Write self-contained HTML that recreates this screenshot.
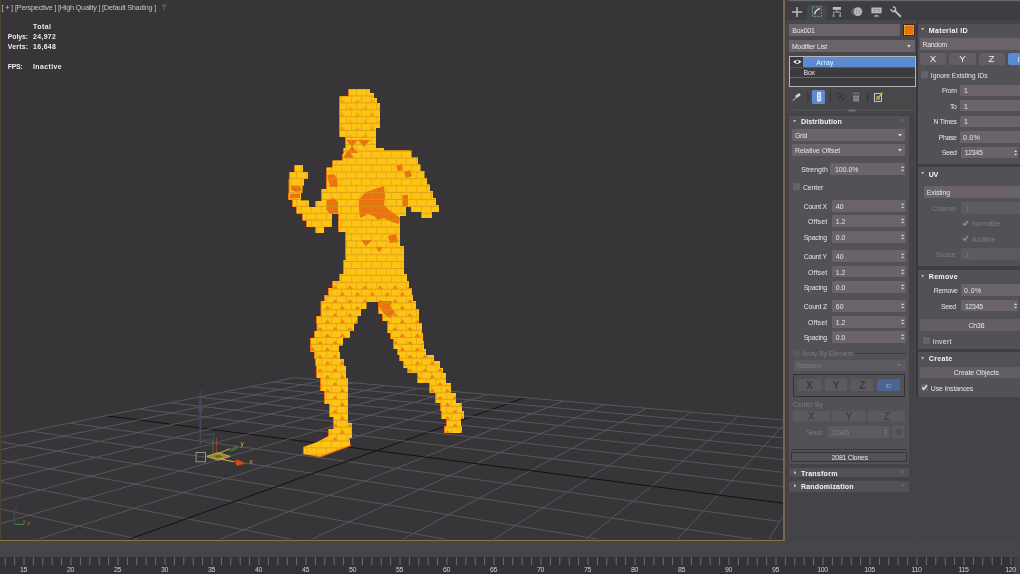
<!DOCTYPE html>
<html lang="en"><head><meta charset="utf-8"><title>3ds Max - Array modifier</title>
<style>html,body{margin:0;padding:0}body{width:1020px;height:574px;overflow:hidden;position:relative;background:#444347;font-family:"Liberation Sans", sans-serif;}div{box-sizing:border-box} svg{display:block;overflow:visible} #app{position:absolute;left:0;top:0;width:1020px;height:574px;overflow:hidden;will-change:transform}</style></head><body><div id="app">
<div id="viewport" style="position:absolute;left:0;top:0;width:785px;height:542px;background:#373538;overflow:hidden">
<svg width="785" height="542" viewBox="0 0 785 542" style="position:absolute;left:0;top:0">
<g id="grid"><line x1="664.8" y1="707.4" x2="839.6" y2="425.0" stroke="#5b5a5f" stroke-width="0.9"/>
<line x1="664.8" y1="707.4" x2="-234.8" y2="484.6" stroke="#5b5a5f" stroke-width="0.9"/>
<line x1="547.6" y1="678.4" x2="787.7" y2="420.5" stroke="#5b5a5f" stroke-width="0.9"/>
<line x1="693.6" y1="660.8" x2="-170.3" y2="471.6" stroke="#5b5a5f" stroke-width="0.9"/>
<line x1="444.5" y1="652.9" x2="738.4" y2="416.2" stroke="#5b5a5f" stroke-width="0.9"/>
<line x1="717.2" y1="622.8" x2="-112.4" y2="459.9" stroke="#5b5a5f" stroke-width="0.9"/>
<line x1="352.9" y1="630.2" x2="691.5" y2="412.1" stroke="#5b5a5f" stroke-width="0.9"/>
<line x1="736.8" y1="591.1" x2="-60.2" y2="449.3" stroke="#5b5a5f" stroke-width="0.9"/>
<line x1="271.0" y1="609.9" x2="646.8" y2="408.3" stroke="#5b5a5f" stroke-width="0.9"/>
<line x1="753.4" y1="564.3" x2="-12.8" y2="439.7" stroke="#5b5a5f" stroke-width="0.9"/>
<line x1="197.5" y1="591.7" x2="604.2" y2="404.6" stroke="#5b5a5f" stroke-width="0.9"/>
<line x1="767.6" y1="541.4" x2="30.3" y2="431.0" stroke="#5b5a5f" stroke-width="0.9"/>
<line x1="130.9" y1="575.2" x2="563.5" y2="401.0" stroke="#5b5a5f" stroke-width="0.9"/>
<line x1="779.8" y1="521.5" x2="69.7" y2="423.1" stroke="#5b5a5f" stroke-width="0.9"/>
<line x1="70.5" y1="560.2" x2="524.7" y2="397.7" stroke="#121114" stroke-width="1.0"/>
<line x1="790.6" y1="504.2" x2="105.9" y2="415.8" stroke="#121114" stroke-width="1.0"/>
<line x1="15.4" y1="546.6" x2="487.5" y2="394.4" stroke="#5b5a5f" stroke-width="0.9"/>
<line x1="800.1" y1="488.8" x2="139.2" y2="409.0" stroke="#5b5a5f" stroke-width="0.9"/>
<line x1="-35.0" y1="534.1" x2="451.9" y2="391.3" stroke="#5b5a5f" stroke-width="0.9"/>
<line x1="808.5" y1="475.2" x2="170.0" y2="402.8" stroke="#5b5a5f" stroke-width="0.9"/>
<line x1="-81.4" y1="522.6" x2="417.8" y2="388.4" stroke="#5b5a5f" stroke-width="0.9"/>
<line x1="816.0" y1="463.1" x2="198.5" y2="397.0" stroke="#5b5a5f" stroke-width="0.9"/>
<line x1="-124.3" y1="512.0" x2="385.1" y2="385.5" stroke="#5b5a5f" stroke-width="0.9"/>
<line x1="822.8" y1="452.1" x2="225.0" y2="391.7" stroke="#5b5a5f" stroke-width="0.9"/>
<line x1="-163.9" y1="502.2" x2="353.7" y2="382.8" stroke="#5b5a5f" stroke-width="0.9"/>
<line x1="828.9" y1="442.2" x2="249.8" y2="386.7" stroke="#5b5a5f" stroke-width="0.9"/>
<line x1="-200.6" y1="493.1" x2="323.5" y2="380.2" stroke="#5b5a5f" stroke-width="0.9"/>
<line x1="834.5" y1="433.2" x2="272.9" y2="382.0" stroke="#5b5a5f" stroke-width="0.9"/>
<line x1="-234.8" y1="484.6" x2="294.5" y2="377.7" stroke="#5b5a5f" stroke-width="0.9"/>
<line x1="839.6" y1="425.0" x2="294.5" y2="377.7" stroke="#5b5a5f" stroke-width="0.9"/></g>
<g id="gizmo" fill="none">
<line x1="200.4" y1="393" x2="200.4" y2="444.5" stroke="#454a61" stroke-width="1.7"/>
<path d="M200.4 396.5 L202.9 408.5 L202.3 411.6 L200.4 413.4 L198.5 411.6 L197.9 408.5Z" fill="#454a61"/>
<path d="M202.7 434.5 H213.7 M202.7 440 H213.7 M213.7 433 V447.5" stroke="#474c63" stroke-width="1"/>
<line x1="213" y1="440" x2="213" y2="454" stroke="#3c7d38" stroke-width="0.9"/>
<line x1="216.4" y1="438" x2="216.4" y2="455.5" stroke="#a83f2b" stroke-width="0.9"/>
<rect x="196" y="452.5" width="9.5" height="9.3" stroke="#9a999c" stroke-width="0.9"/>
<path d="M206.7 456.3 L218 452.6 L230.2 456.3 L218 460.2Z" fill="#8a7a2c" fill-opacity="0.55" stroke="#c9b23e" stroke-width="0.9"/>
<path d="M209 456.3 L218 453.6 L227.5 456.3 L218 459.2Z M212 456.3 L218 454.6 L224.5 456.3 L218 458.2Z" stroke="#c9b23e" stroke-width="0.5"/>
<path d="M217.6 454 L230 448.6 M219 458.6 L234 461.8" stroke="#c9b23e" stroke-width="1"/>
<path d="M228.4 450.4 L236.2 445.2 L239.8 447.2 L232 451.4Z" fill="#38732f"/>
<path d="M233.2 461 L237.6 459.2 L246 463.6 L237.4 466Z" fill="#c23a12"/>
<path d="M237.4 461.4h.9v.9h-.9z M239.6 462.4h.9v.9h-.9z M237.6 463.6h.9v.9h-.9z M241.6 463.4h.9v.9h-.9z" fill="#e9c23a"/>
</g>
<text x="201.8" y="393.4" font-size="5" fill="#4a4f66" text-anchor="middle" font-family='"Liberation Sans", sans-serif'>z</text>
<text x="242.2" y="445.6" font-size="6.5" fill="#c9b23e" text-anchor="middle" font-family='"Liberation Sans", sans-serif'>y</text>
<text x="251" y="464" font-size="6.5" fill="#c9b23e" text-anchor="middle" font-family='"Liberation Sans", sans-serif'>x</text>
<g id="tripod" fill="none"><line x1="14.4" y1="508.5" x2="14.4" y2="524.6" stroke="#41465c" stroke-width="1.7"/>
<line x1="15" y1="524.4" x2="24" y2="524.4" stroke="#3f9a3a" stroke-width="0.9"/></g>
<text x="16.4" y="508" font-size="5" fill="#454a61" text-anchor="middle" font-family='"Liberation Sans", sans-serif'>z</text>
<text x="24.2" y="523.4" font-size="5" fill="#4aa03a" text-anchor="middle" font-family='"Liberation Sans", sans-serif'>y</text>
<text x="28.7" y="525.2" font-size="6" font-weight="bold" fill="#b8452a" text-anchor="middle" font-family='"Liberation Sans", sans-serif'>x</text>
<g id="figure"><g fill="#ea730f">
<polygon points="369,89 369,93 373,93 373,98 376,98 376,103 379,103 379,128 375,128 375,148 383,148 383,150.5 410.5,150.5 410.5,157.5 417,157.5 417,164.5 419.5,164.5 419.5,171 423.5,171 423.5,178 426,178 426,184.5 429,184.5 429,191 432,191 432,198 435,198 435,205 438,205 438,212 405,212 405,216 399,216 399,246 403,246 403,274 406,274 406,281 408,281 408,288 411,288 411,295 412,295 412,302 324,302 324,295 328,295 328,288 332,288 332,281 339,281 339,274 343,274 343,260 345,260 345,232 338,232 338,214 315,214 315,201 321,201 321,189 326,189 326,167.5 332,167.5 332,160.5 342,160.5 342,154 343,154 343,148 345,148 345,137 339,137 339,96.3 348,96.3 348,89"/>
<polygon points="421,212 431,212 431,218 421,218"/>
<polygon points="302,165 302,172 307,172 307,179 303,179 303,185.5 301.5,185.5 301.5,193 300,193 300,200.5 308,200.5 308,207 338,207 338,214 331,214 331,227 323,227 323,233 315,233 315,227 306,227 306,220.5 302,220.5 302,213.5 296,213.5 296,207 292,207 292,200 288,200 288,193 288.5,193 288.5,179 289,179 289,172 294,172 294,165"/>
<polygon points="365.5,301 365.5,309 360,309 360,316 356.5,316 356.5,323.5 353,323.5 353,331 349,331 349,338 342,338 342,345.5 338,345.5 338,352 339,352 339,359 343,359 343,366 345,366 345,378 347,378 347,423 351,423 351,438 328,438 328,429 333,429 333,417 329,417 329,404 324,404 324,391 320,391 320,378 316,378 316,366 315,366 315,359 314,359 314,352 310,352 310,338 314,338 314,331 316.5,331 316.5,323.5 316,323.5 316,316 320.5,316 320.5,301"/>
<polygon points="415,301 415,309 418,309 418,323 421,323 421,333 422,333 422,341 423,341 423,349 425,349 425,355 433,355 433,361 439,361 439,368 442,368 442,373 445,373 445,383 450,383 450,393 455,393 455,403 461,403 461,411 463,411 463,419 460,419 460,426 461,426 461,433 444,433 444,426 446,426 446,419 441,419 441,411 440,411 440,403 435,403 435,393 429,393 429,383 417,383 417,373 407,373 407,368 403,368 403,361 399,361 399,355 397,355 397,349 393,349 393,339 390,339 390,333 387,333 387,321 382,321 382,314 378,314 378,301"/>
<polygon points="303,447 317,442 328,436 349,436 349,445 319,456 303,454"/>
<polygon points="303,454 320,457.5 351,446 351,444 320,455 303,452"/>
</g>
<g fill="#fdc413">
<polygon points="370,89 370,93 374,93 374,98 377,98 377,103 380,103 380,128 376,128 376,148 384,148 384,150.5 411.5,150.5 411.5,157.5 418,157.5 418,164.5 420.5,164.5 420.5,171 424.5,171 424.5,178 427,178 427,184.5 430,184.5 430,191 433,191 433,198 436,198 436,205 439,205 439,212 406,212 406,216 400,216 400,246 404,246 404,274 407,274 407,281 409,281 409,288 412,288 412,295 413,295 413,302 325,302 325,295 329,295 329,288 333,288 333,281 340,281 340,274 344,274 344,260 346,260 346,232 339,232 339,214 316,214 316,201 322,201 322,189 327,189 327,167.5 333,167.5 333,160.5 343,160.5 343,154 344,154 344,148 346,148 346,137 340,137 340,96.3 349,96.3 349,89"/>
<polygon points="422,212 432,212 432,218 422,218"/>
<polygon points="303,165 303,172 308,172 308,179 304,179 304,185.5 302.5,185.5 302.5,193 301,193 301,200.5 309,200.5 309,207 339,207 339,214 332,214 332,227 324,227 324,233 316,233 316,227 307,227 307,220.5 303,220.5 303,213.5 297,213.5 297,207 293,207 293,200 289,200 289,193 289.5,193 289.5,179 290,179 290,172 295,172 295,165"/>
<polygon points="366.5,301 366.5,309 361,309 361,316 357.5,316 357.5,323.5 354,323.5 354,331 350,331 350,338 343,338 343,345.5 339,345.5 339,352 340,352 340,359 344,359 344,366 346,366 346,378 348,378 348,423 352,423 352,438 329,438 329,429 334,429 334,417 330,417 330,404 325,404 325,391 321,391 321,378 317,378 317,366 316,366 316,359 315,359 315,352 311,352 311,338 315,338 315,331 317.5,331 317.5,323.5 317,323.5 317,316 321.5,316 321.5,301"/>
<polygon points="416,301 416,309 419,309 419,323 422,323 422,333 423,333 423,341 424,341 424,349 426,349 426,355 434,355 434,361 440,361 440,368 443,368 443,373 446,373 446,383 451,383 451,393 456,393 456,403 462,403 462,411 464,411 464,419 461,419 461,426 462,426 462,433 445,433 445,426 447,426 447,419 442,419 442,411 441,411 441,403 436,403 436,393 430,393 430,383 418,383 418,373 408,373 408,368 404,368 404,361 400,361 400,355 398,355 398,349 394,349 394,339 391,339 391,333 388,333 388,321 383,321 383,314 379,314 379,301"/>
<polygon points="304,447 318,442 329,436 350,436 350,445 320,456 304,454"/>
</g>
<g fill="#ea730f">
<polygon points="359,199 366,192 384,186 385,196 384,205 389,210 400,218 399,224 392,222 384,218 378,220 374,216 368,214 360,218 359,208"/>
<polygon points="326.5,200 334,198 338,202 338,213 330,214 326.5,210"/>
<polygon points="327,175 334,174 337.5,180 337.5,187 330,187"/>
<polygon points="346,140 358,140 352,147"/><polygon points="358,140 370,140 364,147"/><polygon points="347,153 352,146 358,153"/><polygon points="343,158 348,150 354,158"/>
<polygon points="404,172 410,170 412,176 406,178"/><polygon points="396,166 402,164 403,170 398,171"/><polygon points="388,236 396,234 398,242 390,243"/><polygon points="361,240 372,240 366,246"/><polygon points="376,247 383,247 379,252"/>
<polygon points="291,186 300,186 302,191 296,192 291,190"/><polygon points="290,194 300,193.5 300,198 290,198.5"/>
<polygon points="379,301 392,301 390,306 395,312 390,318 384,314 379,306"/>
<polygon points="402.5,195 408,195 408,207 402.5,207"/>
<rect x="406" y="207" width="5" height="5.4" fill="#373538"/>
</g><defs><pattern id="bricks" x="286" y="88.6" width="10" height="13.8" patternUnits="userSpaceOnUse"><path d="M0 0.4H10M0 7.3H10" stroke="#d0951a" stroke-width="0.9" fill="none"/><path d="M0.4 0V6.9M5.4 6.9V13.8" stroke="#d0951a" stroke-width="0.8" fill="none" opacity="0.7"/></pattern><pattern id="tris" x="286" y="88.6" width="15" height="13.8" patternUnits="userSpaceOnUse"><path d="M1.2 7 L4 3.6 L6.8 7Z M8.5 13.8 L11.5 10.2 L14.2 13.8Z" fill="#ea730f"/></pattern>
<clipPath id="figclip">
<polygon points="370,89 370,93 374,93 374,98 377,98 377,103 380,103 380,128 376,128 376,148 384,148 384,150.5 411.5,150.5 411.5,157.5 418,157.5 418,164.5 420.5,164.5 420.5,171 424.5,171 424.5,178 427,178 427,184.5 430,184.5 430,191 433,191 433,198 436,198 436,205 439,205 439,212 406,212 406,216 400,216 400,246 404,246 404,274 407,274 407,281 409,281 409,288 412,288 412,295 413,295 413,302 325,302 325,295 329,295 329,288 333,288 333,281 340,281 340,274 344,274 344,260 346,260 346,232 339,232 339,214 316,214 316,201 322,201 322,189 327,189 327,167.5 333,167.5 333,160.5 343,160.5 343,154 344,154 344,148 346,148 346,137 340,137 340,96.3 349,96.3 349,89"/>
<polygon points="422,212 432,212 432,218 422,218"/>
<polygon points="303,165 303,172 308,172 308,179 304,179 304,185.5 302.5,185.5 302.5,193 301,193 301,200.5 309,200.5 309,207 339,207 339,214 332,214 332,227 324,227 324,233 316,233 316,227 307,227 307,220.5 303,220.5 303,213.5 297,213.5 297,207 293,207 293,200 289,200 289,193 289.5,193 289.5,179 290,179 290,172 295,172 295,165"/>
<polygon points="366.5,301 366.5,309 361,309 361,316 357.5,316 357.5,323.5 354,323.5 354,331 350,331 350,338 343,338 343,345.5 339,345.5 339,352 340,352 340,359 344,359 344,366 346,366 346,378 348,378 348,423 352,423 352,438 329,438 329,429 334,429 334,417 330,417 330,404 325,404 325,391 321,391 321,378 317,378 317,366 316,366 316,359 315,359 315,352 311,352 311,338 315,338 315,331 317.5,331 317.5,323.5 317,323.5 317,316 321.5,316 321.5,301"/>
<polygon points="416,301 416,309 419,309 419,323 422,323 422,333 423,333 423,341 424,341 424,349 426,349 426,355 434,355 434,361 440,361 440,368 443,368 443,373 446,373 446,383 451,383 451,393 456,393 456,403 462,403 462,411 464,411 464,419 461,419 461,426 462,426 462,433 445,433 445,426 447,426 447,419 442,419 442,411 441,411 441,403 436,403 436,393 430,393 430,383 418,383 418,373 408,373 408,368 404,368 404,361 400,361 400,355 398,355 398,349 394,349 394,339 391,339 391,333 388,333 388,321 383,321 383,314 379,314 379,301"/>
<polygon points="304,447 318,442 329,436 350,436 350,445 320,456 304,454"/>
</clipPath></defs>
<rect x="286" y="89" width="182" height="370" fill="url(#bricks)" clip-path="url(#figclip)" opacity="0.85"/>
<g clip-path="url(#figclip)"><rect x="300" y="282" width="170" height="160" fill="url(#tris)" opacity="0.8"/><rect x="340" y="100" width="42" height="40" fill="url(#tris)" opacity="0.35"/></g></g>
<path d="M161.4 4.6 H167.2 L165 7.6 V10.8 L163.6 9.8 V7.6Z" fill="#5a595e"/>
</svg>
<div style="position:absolute;top:3px;height:10px;line-height:10px;font-size:7.3px;color:#c4c4c6;white-space:nowrap;letter-spacing:1.5px;left:1.80px;">[+]</div>
<div style="position:absolute;top:3px;height:10px;line-height:10px;font-size:7.3px;color:#c4c4c6;white-space:nowrap;letter-spacing:-0.21px;left:15.00px;">[Perspective ]</div>
<div style="position:absolute;top:3px;height:10px;line-height:10px;font-size:7.3px;color:#c4c4c6;white-space:nowrap;letter-spacing:-0.225px;left:57.90px;">[High Quality ]</div>
<div style="position:absolute;top:3px;height:10px;line-height:10px;font-size:7.3px;color:#c4c4c6;white-space:nowrap;letter-spacing:-0.225px;left:102.00px;">[Default Shading ]</div>
<div style="position:absolute;top:22px;height:10px;line-height:10px;font-size:6.9px;color:#ededed;white-space:nowrap;font-weight:bold;letter-spacing:0.508px;left:33.00px;">Total</div>
<div style="position:absolute;top:32px;height:10px;line-height:10px;font-size:6.9px;color:#ededed;white-space:nowrap;font-weight:bold;letter-spacing:-0.081px;left:7.80px;">Polys:</div>
<div style="position:absolute;top:32px;height:10px;line-height:10px;font-size:6.9px;color:#ededed;white-space:nowrap;font-weight:bold;letter-spacing:0.359px;left:33.00px;">24,972</div>
<div style="position:absolute;top:42px;height:10px;line-height:10px;font-size:6.9px;color:#ededed;white-space:nowrap;font-weight:bold;letter-spacing:0.225px;left:7.80px;">Verts:</div>
<div style="position:absolute;top:42px;height:10px;line-height:10px;font-size:6.9px;color:#ededed;white-space:nowrap;font-weight:bold;letter-spacing:0.359px;left:33.00px;">16,648</div>
<div style="position:absolute;top:62px;height:10px;line-height:10px;font-size:6.9px;color:#ededed;white-space:nowrap;font-weight:bold;letter-spacing:-0.35px;left:7.80px;">FPS:</div>
<div style="position:absolute;top:62px;height:10px;line-height:10px;font-size:6.9px;color:#ededed;white-space:nowrap;font-weight:bold;letter-spacing:0.415px;left:33.00px;">Inactive</div>
<div style="position:absolute;left:0.00px;top:0.00px;width:1.30px;height:542.00px;background:#4b4634;"></div>
<div style="position:absolute;left:0.00px;top:539.30px;width:785.00px;height:0.60px;background:#3f3a30;"></div>
<div style="position:absolute;left:0.00px;top:539.80px;width:785.00px;height:1.50px;background:#85763f;"></div>
<div style="position:absolute;left:782.80px;top:0.00px;width:2.20px;height:541.30px;background:#77665a;"></div>
</div>
<div id="cmdpanel" style="position:absolute;left:785px;top:0;width:235px;height:541.6px;background:#444347"></div>
<div style="position:absolute;left:785.00px;top:0.00px;width:1.00px;height:541.30px;background:#464238;"></div>
<div style="position:absolute;left:788.80px;top:0.00px;width:232.00px;height:1.00px;background:#68676c;"></div>
<div style="position:absolute;left:785.00px;top:1.60px;width:235.00px;height:18.80px;background:#3e3d41;"></div>
<div style="position:absolute;left:786.00px;top:20.40px;width:130.20px;height:92.60px;background:#484749;"></div>
<div style="position:absolute;left:806.90px;top:4.70px;width:20.00px;height:15.90px;background:#484749;"></div>
<svg style="position:absolute;left:785px;top:0" width="235" height="22" viewBox="785 0 235 22">
<path d="M792 11.9 H802.2 M797 7 V16.9" stroke="#b9b9bb" stroke-width="1.5" fill="none"/>
<rect x="812.5" y="6.9" width="8.8" height="9.6" fill="none" stroke="#5f93a4" stroke-width="1" stroke-dasharray="2.4 1"/>
<path d="M814.6 14.4 Q815.4 9.6 820 8.6" stroke="#e6e6e6" stroke-width="1.3" fill="none"/>
<rect x="832.8" y="7" width="8.2" height="2.8" fill="#bdbdbf"/>
<path d="M836.9 9.8 V12 M833.6 15 V12 H840.2 V15" stroke="#bdbdbf" stroke-width="0.8" fill="none"/>
<rect x="832.6" y="15" width="2" height="2" fill="#6f9aa6"/><rect x="839.2" y="15" width="2" height="2" fill="#6f9aa6"/>
<circle cx="855.2" cy="11.6" r="4.2" fill="#59585d"/>
<circle cx="857.9" cy="11.6" r="4.3" fill="#b4b4b6"/>
<circle cx="856.6" cy="10.4" r="0.6" fill="#8a898d"/><circle cx="859.2" cy="10.4" r="0.6" fill="#8a898d"/><circle cx="856.6" cy="12.9" r="0.6" fill="#8a898d"/><circle cx="859.2" cy="12.9" r="0.6" fill="#8a898d"/>
<rect x="871.4" y="7.5" width="10.2" height="5.8" fill="#b9b9bb"/>
<path d="M873.4 9h1.6v1h-1.6z M875.8 9h1.6v1h-1.6z M878.2 9h1.6v1h-1.6z M873.4 10.8h1.6v1h-1.6z M875.8 10.8h1.6v1h-1.6z M878.2 10.8h1.6v1h-1.6z" fill="#8d8c90"/>
<path d="M874.2 16.2 Q876.5 14.2 878.8 16.2Z" fill="#b9b9bb" stroke="#b9b9bb" stroke-width="0.6"/>
<path d="M894.6 10.6 L900.4 16.2" stroke="#bdbdbf" stroke-width="1.9" fill="none" stroke-linecap="round"/>
<path d="M893.0 7.1 A2.3 2.3 0 1 1 891.1 9.0" stroke="#bdbdbf" stroke-width="1.4" fill="none"/>
</svg>
<div style="position:absolute;left:789.30px;top:24.20px;width:110.50px;height:11.70px;background:#6a636a;border-radius:1px;"></div>
<div style="position:absolute;top:26px;height:10px;line-height:10px;font-size:6.9px;color:#e6e6e6;white-space:nowrap;letter-spacing:-0.16px;left:792.30px;">Box001</div>
<div style="position:absolute;left:902.60px;top:23.90px;width:12.80px;height:12.40px;background:#ea720e;border:0.7px solid #3a2a1c;"></div>
<div style="position:absolute;left:903.70px;top:25.10px;width:10.60px;height:10.10px;background:transparent;border:0.8px dotted #f7c21a;"></div>
<div style="position:absolute;left:789.30px;top:40.30px;width:126.00px;height:11.70px;background:#6a636a;border-radius:1px;"></div>
<div style="position:absolute;top:42px;height:10px;line-height:10px;font-size:6.9px;color:#e6e6e6;white-space:nowrap;letter-spacing:-0.158px;left:791.90px;">Modifier List</div>
<svg style="position:absolute;left:907.40px;top:45.00px" width="3.8" height="2.6" viewBox="0 0 3.8 2.6"><path d="M0 0 L3.8 0 L1.9 2.5Z" fill="#dcdcde"/></svg>
<div style="position:absolute;left:788.90px;top:55.50px;width:127.10px;height:31.10px;background:#3c3b40;border:0.8px solid #b6b6ba;"></div>
<div style="position:absolute;left:802.70px;top:57.10px;width:112.10px;height:9.80px;background:#5b8ad0;"></div>
<div style="position:absolute;top:58px;height:10px;line-height:10px;font-size:6.9px;color:#f6f6f6;white-space:nowrap;letter-spacing:0.179px;left:816.30px;">Array</div>
<div style="position:absolute;top:68px;height:10px;line-height:10px;font-size:6.9px;color:#e2e2e2;white-space:nowrap;letter-spacing:-0.295px;left:803.60px;">Box</div>
<div style="position:absolute;left:790.00px;top:67.40px;width:125.00px;height:0.70px;background:#58575c;"></div>
<div style="position:absolute;left:790.00px;top:77.20px;width:125.00px;height:0.70px;background:#66656a;"></div>
<svg style="position:absolute;left:793.4px;top:59px" width="8.6" height="5.6" viewBox="0 0 8.6 5.6">
<path d="M0.2 2.8 Q4.3 -1.5 8.4 2.8 Q4.3 7.1 0.2 2.8Z" fill="#f2f2f2"/><circle cx="4.3" cy="2.8" r="1.45" fill="#3c3b40"/></svg>
<div style="position:absolute;left:812.20px;top:90.30px;width:13.00px;height:13.30px;background:#5b8ad0;border-radius:1.5px;"></div>
<svg style="position:absolute;left:785px;top:88px" width="130" height="26" viewBox="785 88 130 26">
<path d="M793 100.8 L796.4 97.2" stroke="#d4d4d6" stroke-width="1"/>
<path d="M795.9 97.0 L799.9 94.2" stroke="#d8d8da" stroke-width="2.7"/>
<path d="M808 92.4 V101.8 M830.4 92.4 V101.8 M867.7 92.4 V101.8" stroke="#2c2b2f" stroke-width="0.9"/>
<rect x="817" y="91.9" width="4.2" height="9.7" rx="1.2" fill="#dfe7f5"/>
<path d="M819.1 93.6 V100.2" stroke="#3f69b4" stroke-width="0.9" stroke-dasharray="0.9 0.8"/>
<circle cx="838.8" cy="95.2" r="1.9" fill="#4c4b50" stroke="#2f2e32" stroke-width="0.7"/><circle cx="843.6" cy="96.5" r="1.9" fill="#4c4b50" stroke="#2f2e32" stroke-width="0.7"/><circle cx="841" cy="99.4" r="1.9" fill="#4c4b50" stroke="#2f2e32" stroke-width="0.7"/>
<path d="M853.2 95.4 H859 V100.4 Q859 101.6 857.8 101.6 H854.4 Q853.2 101.6 853.2 100.4Z" fill="#8a898e"/>
<path d="M853.2 94.6 Q853.2 92.8 856.1 92.8 Q859 92.8 859 94.6" stroke="#8a898e" stroke-width="0.9" fill="none"/>
<path d="M855.2 96.4 V100.4 M857 96.4 V100.4" stroke="#605f64" stroke-width="0.6"/>
<rect x="874.5" y="93.6" width="7" height="7.8" fill="none" stroke="#d2d2d4" stroke-width="0.9"/>
<path d="M875.8 99 H880.2" stroke="#d2d2d4" stroke-width="0.8"/>
<path d="M876.6 96.2 L878.4 98 L882.4 92.6" stroke="#e2b53a" stroke-width="1.3" fill="none"/>
<path d="M792.5 110.2 H846.5 M857.5 110.2 H912.7" stroke="#5f5e63" stroke-width="0.7"/>
<path d="M847.4 109.4 H856.6 L855.2 111.6 H848.8Z" fill="#737277"/>
</svg>
<div style="position:absolute;left:789.40px;top:115.80px;width:119.40px;height:348.00px;background:#525155;border-radius:1.5px;"></div>
<div style="position:absolute;left:789.40px;top:115.80px;width:119.40px;height:11.20px;background:#525155;border-radius:1.5px;"></div><svg style="position:absolute;left:793.10px;top:119.50px" width="3.2" height="2.6" viewBox="0 0 3.2 2.6"><path d="M0 0 L3.2 0 L1.6 2.5Z" fill="#b9b9bc"/></svg><div style="position:absolute;top:117px;height:10px;line-height:10px;font-size:7.1px;color:#f4f4f4;white-space:nowrap;font-weight:bold;letter-spacing:0.097px;left:801.00px;">Distribution</div><div style="position:absolute;left:901.00px;top:118.60px;width:3.40px;height:3.60px;background:#605f64;"></div>
<div style="position:absolute;left:792.30px;top:128.90px;width:113.20px;height:11.70px;background:#6a636a;border-radius:1px;"></div>
<div style="position:absolute;top:131px;height:10px;line-height:10px;font-size:6.9px;color:#e6e6e6;white-space:nowrap;letter-spacing:-0.178px;left:794.90px;">Grid</div>
<svg style="position:absolute;left:898.30px;top:133.80px" width="3.8" height="2.6" viewBox="0 0 3.8 2.6"><path d="M0 0 L3.8 0 L1.9 2.5Z" fill="#dcdcde"/></svg>
<div style="position:absolute;left:792.30px;top:144.10px;width:113.20px;height:11.80px;background:#6a636a;border-radius:1px;"></div>
<div style="position:absolute;top:146px;height:10px;line-height:10px;font-size:6.9px;color:#e6e6e6;white-space:nowrap;letter-spacing:0.02px;left:794.90px;">Relative Offset</div>
<svg style="position:absolute;left:898.30px;top:149.00px" width="3.8" height="2.6" viewBox="0 0 3.8 2.6"><path d="M0 0 L3.8 0 L1.9 2.5Z" fill="#dcdcde"/></svg>
<div style="position:absolute;top:165px;height:10px;line-height:10px;font-size:6.9px;color:#e6e6e6;white-space:nowrap;letter-spacing:0.074px;right:192.13px;">Strength</div>
<div style="position:absolute;left:830.40px;top:162.60px;width:75.10px;height:12.10px;background:#6a636a;border-radius:1px;"></div><div style="position:absolute;top:165px;height:10px;line-height:10px;font-size:6.9px;color:#e6e6e6;white-space:nowrap;letter-spacing:0.02px;left:835.00px;">100.0%</div><svg style="position:absolute;left:901.30px;top:165.75px" width="3.2" height="5.8" viewBox="0 0 3.2 5.8"><path d="M0 2.1 L1.6 0.3 L3.2 2.1Z M0 3.7 L1.6 5.5 L3.2 3.7Z" fill="#dcdcde"/></svg>
<div style="position:absolute;left:792.80px;top:183.30px;width:7.10px;height:7.00px;background:#656268;border-radius:1px;"></div>
<div style="position:absolute;top:183px;height:10px;line-height:10px;font-size:6.9px;color:#e6e6e6;white-space:nowrap;letter-spacing:-0.102px;left:803.00px;">Center</div>
<div style="position:absolute;top:202px;height:10px;line-height:10px;font-size:6.9px;color:#e6e6e6;white-space:nowrap;letter-spacing:-0.239px;right:193.04px;">Count X</div><div style="position:absolute;left:832.00px;top:199.85px;width:73.50px;height:11.95px;background:#6a636a;border-radius:1px;"></div><div style="position:absolute;top:202px;height:10px;line-height:10px;font-size:6.9px;color:#e6e6e6;white-space:nowrap;left:835.80px;">40</div><svg style="position:absolute;left:901.30px;top:202.92px" width="3.2" height="5.8" viewBox="0 0 3.2 5.8"><path d="M0 2.1 L1.6 0.3 L3.2 2.1Z M0 3.7 L1.6 5.5 L3.2 3.7Z" fill="#dcdcde"/></svg><div style="position:absolute;top:217px;height:10px;line-height:10px;font-size:6.9px;color:#e6e6e6;white-space:nowrap;letter-spacing:0.204px;right:192.60px;">Offset</div><div style="position:absolute;left:832.00px;top:215.25px;width:73.50px;height:11.95px;background:#6a636a;border-radius:1px;"></div><div style="position:absolute;top:217px;height:10px;line-height:10px;font-size:6.9px;color:#e6e6e6;white-space:nowrap;left:835.80px;">1.2</div><svg style="position:absolute;left:901.30px;top:218.32px" width="3.2" height="5.8" viewBox="0 0 3.2 5.8"><path d="M0 2.1 L1.6 0.3 L3.2 2.1Z M0 3.7 L1.6 5.5 L3.2 3.7Z" fill="#dcdcde"/></svg><div style="position:absolute;top:233px;height:10px;line-height:10px;font-size:6.9px;color:#e6e6e6;white-space:nowrap;letter-spacing:-0.239px;right:193.04px;">Spacing</div><div style="position:absolute;left:832.00px;top:230.65px;width:73.50px;height:11.95px;background:#6a636a;border-radius:1px;"></div><div style="position:absolute;top:233px;height:10px;line-height:10px;font-size:6.9px;color:#e6e6e6;white-space:nowrap;left:835.80px;">0.0</div><svg style="position:absolute;left:901.30px;top:233.72px" width="3.2" height="5.8" viewBox="0 0 3.2 5.8"><path d="M0 2.1 L1.6 0.3 L3.2 2.1Z M0 3.7 L1.6 5.5 L3.2 3.7Z" fill="#dcdcde"/></svg>
<div style="position:absolute;top:252px;height:10px;line-height:10px;font-size:6.9px;color:#e6e6e6;white-space:nowrap;letter-spacing:-0.218px;right:193.02px;">Count Y</div><div style="position:absolute;left:832.00px;top:250.10px;width:73.50px;height:11.95px;background:#6a636a;border-radius:1px;"></div><div style="position:absolute;top:252px;height:10px;line-height:10px;font-size:6.9px;color:#e6e6e6;white-space:nowrap;left:835.80px;">40</div><svg style="position:absolute;left:901.30px;top:253.17px" width="3.2" height="5.8" viewBox="0 0 3.2 5.8"><path d="M0 2.1 L1.6 0.3 L3.2 2.1Z M0 3.7 L1.6 5.5 L3.2 3.7Z" fill="#dcdcde"/></svg><div style="position:absolute;top:268px;height:10px;line-height:10px;font-size:6.9px;color:#e6e6e6;white-space:nowrap;letter-spacing:0.204px;right:192.60px;">Offset</div><div style="position:absolute;left:832.00px;top:265.50px;width:73.50px;height:11.95px;background:#6a636a;border-radius:1px;"></div><div style="position:absolute;top:268px;height:10px;line-height:10px;font-size:6.9px;color:#e6e6e6;white-space:nowrap;left:835.80px;">1.2</div><svg style="position:absolute;left:901.30px;top:268.57px" width="3.2" height="5.8" viewBox="0 0 3.2 5.8"><path d="M0 2.1 L1.6 0.3 L3.2 2.1Z M0 3.7 L1.6 5.5 L3.2 3.7Z" fill="#dcdcde"/></svg><div style="position:absolute;top:283px;height:10px;line-height:10px;font-size:6.9px;color:#e6e6e6;white-space:nowrap;letter-spacing:-0.239px;right:193.04px;">Spacing</div><div style="position:absolute;left:832.00px;top:280.90px;width:73.50px;height:11.95px;background:#6a636a;border-radius:1px;"></div><div style="position:absolute;top:283px;height:10px;line-height:10px;font-size:6.9px;color:#e6e6e6;white-space:nowrap;left:835.80px;">0.0</div><svg style="position:absolute;left:901.30px;top:283.98px" width="3.2" height="5.8" viewBox="0 0 3.2 5.8"><path d="M0 2.1 L1.6 0.3 L3.2 2.1Z M0 3.7 L1.6 5.5 L3.2 3.7Z" fill="#dcdcde"/></svg>
<div style="position:absolute;top:302px;height:10px;line-height:10px;font-size:6.9px;color:#e6e6e6;white-space:nowrap;letter-spacing:-0.174px;right:192.97px;">Count Z</div><div style="position:absolute;left:832.00px;top:300.35px;width:73.50px;height:11.95px;background:#6a636a;border-radius:1px;"></div><div style="position:absolute;top:302px;height:10px;line-height:10px;font-size:6.9px;color:#e6e6e6;white-space:nowrap;left:835.80px;">60</div><svg style="position:absolute;left:901.30px;top:303.43px" width="3.2" height="5.8" viewBox="0 0 3.2 5.8"><path d="M0 2.1 L1.6 0.3 L3.2 2.1Z M0 3.7 L1.6 5.5 L3.2 3.7Z" fill="#dcdcde"/></svg><div style="position:absolute;top:318px;height:10px;line-height:10px;font-size:6.9px;color:#e6e6e6;white-space:nowrap;letter-spacing:0.204px;right:192.60px;">Offset</div><div style="position:absolute;left:832.00px;top:315.75px;width:73.50px;height:11.95px;background:#6a636a;border-radius:1px;"></div><div style="position:absolute;top:318px;height:10px;line-height:10px;font-size:6.9px;color:#e6e6e6;white-space:nowrap;left:835.80px;">1.2</div><svg style="position:absolute;left:901.30px;top:318.82px" width="3.2" height="5.8" viewBox="0 0 3.2 5.8"><path d="M0 2.1 L1.6 0.3 L3.2 2.1Z M0 3.7 L1.6 5.5 L3.2 3.7Z" fill="#dcdcde"/></svg><div style="position:absolute;top:333px;height:10px;line-height:10px;font-size:6.9px;color:#e6e6e6;white-space:nowrap;letter-spacing:-0.239px;right:193.04px;">Spacing</div><div style="position:absolute;left:832.00px;top:331.15px;width:73.50px;height:11.95px;background:#6a636a;border-radius:1px;"></div><div style="position:absolute;top:333px;height:10px;line-height:10px;font-size:6.9px;color:#e6e6e6;white-space:nowrap;left:835.80px;">0.0</div><svg style="position:absolute;left:901.30px;top:334.23px" width="3.2" height="5.8" viewBox="0 0 3.2 5.8"><path d="M0 2.1 L1.6 0.3 L3.2 2.1Z M0 3.7 L1.6 5.5 L3.2 3.7Z" fill="#dcdcde"/></svg>
<div style="position:absolute;left:855.00px;top:352.50px;width:51.00px;height:0.70px;background:#3a393d;"></div>
<div style="position:absolute;left:792.50px;top:350.00px;width:7.10px;height:7.00px;background:#59585c;border-radius:1px;"></div>
<div style="position:absolute;top:349px;height:10px;line-height:10px;font-size:6.9px;color:#7b7a7f;white-space:nowrap;letter-spacing:-0.146px;left:801.70px;">Array By Element</div>
<div style="position:absolute;left:794.00px;top:359.70px;width:111.50px;height:11.30px;background:#5b5a5f;border-radius:1px;"></div>
<div style="position:absolute;top:361px;height:10px;line-height:10px;font-size:6.9px;color:#7b7a7f;white-space:nowrap;letter-spacing:-0.296px;left:796.20px;">Random</div>
<svg style="position:absolute;left:896.90px;top:364.20px" width="3.8" height="2.6" viewBox="0 0 3.8 2.6"><path d="M0 0 L3.8 0 L1.9 2.5Z" fill="#77767b"/></svg>
<div style="position:absolute;left:792.80px;top:374.30px;width:112.70px;height:22.90px;background:transparent;border:0.9px solid #323135;"></div>
<div style="position:absolute;left:798.40px;top:378.90px;width:22.20px;height:12.40px;background:#5b5a5f;border-radius:1.5px;"></div>
<div style="position:absolute;top:380px;height:10px;line-height:10px;font-size:10.5px;color:#3d3c41;white-space:nowrap;font-weight:bold;left:709.50px;width:200px;text-align:center;">X</div>
<div style="position:absolute;left:825.20px;top:378.90px;width:22.20px;height:12.40px;background:#5b5a5f;border-radius:1.5px;"></div>
<div style="position:absolute;top:380px;height:10px;line-height:10px;font-size:10.5px;color:#3d3c41;white-space:nowrap;font-weight:bold;left:736.30px;width:200px;text-align:center;">Y</div>
<div style="position:absolute;left:851.30px;top:378.90px;width:22.20px;height:12.40px;background:#5b5a5f;border-radius:1.5px;"></div>
<div style="position:absolute;top:380px;height:10px;line-height:10px;font-size:10.5px;color:#3d3c41;white-space:nowrap;font-weight:bold;left:762.40px;width:200px;text-align:center;">Z</div>
<div style="position:absolute;left:876.80px;top:378.90px;width:22.90px;height:12.40px;background:#4a6592;border-radius:1.5px;"></div>
<div style="position:absolute;top:381px;height:10px;line-height:10px;font-size:5.6px;color:#8aa2c8;white-space:nowrap;left:788.25px;width:200px;text-align:center;">ID</div>
<div style="position:absolute;top:400px;height:10px;line-height:10px;font-size:6.9px;color:#7b7a7f;white-space:nowrap;letter-spacing:-0.072px;left:792.80px;">Center By</div>
<div style="position:absolute;left:793.20px;top:410.90px;width:36.60px;height:10.50px;background:#5b5a5f;border-radius:1.5px;"></div>
<div style="position:absolute;top:411px;height:10px;line-height:10px;font-size:10.5px;color:#434247;white-space:nowrap;font-weight:bold;left:711.50px;width:200px;text-align:center;">X</div>
<div style="position:absolute;left:831.70px;top:410.90px;width:34.70px;height:10.50px;background:#5b5a5f;border-radius:1.5px;"></div>
<div style="position:absolute;top:411px;height:10px;line-height:10px;font-size:10.5px;color:#434247;white-space:nowrap;font-weight:bold;left:749.05px;width:200px;text-align:center;">Y</div>
<div style="position:absolute;left:868.30px;top:410.90px;width:36.60px;height:10.50px;background:#5b5a5f;border-radius:1.5px;"></div>
<div style="position:absolute;top:411px;height:10px;line-height:10px;font-size:10.5px;color:#434247;white-space:nowrap;font-weight:bold;left:786.60px;width:200px;text-align:center;">Z</div>
<div style="position:absolute;top:428px;height:10px;line-height:10px;font-size:6.9px;color:#7b7a7f;white-space:nowrap;letter-spacing:-0.35px;right:198.45px;">Seed</div>
<div style="position:absolute;left:827.50px;top:426.30px;width:61.10px;height:11.30px;background:#5b5a5f;border-radius:1px;"></div><div style="position:absolute;top:428px;height:10px;line-height:10px;font-size:6.9px;color:#7b7a7f;white-space:nowrap;letter-spacing:-0.272px;left:831.30px;">12345</div><svg style="position:absolute;left:884.40px;top:429.05px" width="3.2" height="5.8" viewBox="0 0 3.2 5.8"><path d="M0 2.1 L1.6 0.3 L3.2 2.1Z M0 3.7 L1.6 5.5 L3.2 3.7Z" fill="#77767b"/></svg>
<div style="position:absolute;left:893.40px;top:426.30px;width:10.80px;height:11.30px;background:#5b5a5f;border-radius:1.5px;"></div>
<svg style="position:absolute;left:895px;top:428.4px" width="8" height="7" viewBox="0 0 8 7"><path d="M1 2.4 L4 0.8 L7 2.4 V5 L4 6.4 L1 5Z M1 2.4 L4 3.8 L7 2.4 M4 3.8 V6.4" fill="none" stroke="#45444a" stroke-width="0.8"/></svg>
<div style="position:absolute;left:791.20px;top:449.10px;width:115.70px;height:0.70px;background:#3b3a3e;"></div>
<div style="position:absolute;left:791.20px;top:451.70px;width:115.70px;height:9.90px;background:#525155;border:0.8px solid #37363a;border-radius:1px;"></div>
<div style="position:absolute;top:453px;height:10px;line-height:10px;font-size:6.9px;color:#e6e6e6;white-space:nowrap;letter-spacing:-0.225px;left:749.79px;width:200px;text-align:center;">2081 Clones</div>
<div style="position:absolute;left:789.40px;top:467.70px;width:119.40px;height:9.80px;background:#525155;border-radius:1.5px;"></div><svg style="position:absolute;left:793.50px;top:470.50px" width="2.6" height="3.4" viewBox="0 0 2.6 3.4"><path d="M0 0 L2.5 1.7 L0 3.4Z" fill="#b9b9bc"/></svg><div style="position:absolute;top:469px;height:10px;line-height:10px;font-size:7.1px;color:#f4f4f4;white-space:nowrap;font-weight:bold;letter-spacing:0.222px;left:801.00px;">Transform</div><div style="position:absolute;left:901.00px;top:470.40px;width:3.40px;height:3.60px;background:#605f64;"></div>
<div style="position:absolute;left:789.40px;top:481.40px;width:119.40px;height:10.20px;background:#525155;border-radius:1.5px;"></div><svg style="position:absolute;left:793.50px;top:484.00px" width="2.6" height="3.4" viewBox="0 0 2.6 3.4"><path d="M0 0 L2.5 1.7 L0 3.4Z" fill="#b9b9bc"/></svg><div style="position:absolute;top:482px;height:10px;line-height:10px;font-size:7.1px;color:#f4f4f4;white-space:nowrap;font-weight:bold;letter-spacing:0.151px;left:801.00px;">Randomization</div><div style="position:absolute;left:901.00px;top:483.90px;width:3.40px;height:3.60px;background:#605f64;"></div>
<div style="position:absolute;left:914.30px;top:88.00px;width:0.80px;height:452.00px;background:transparent;border-left:0.8px dotted #504d55;"></div>
<div style="position:absolute;left:916.20px;top:22.00px;width:1.60px;height:375.00px;background:#39383c;"></div>
<div style="position:absolute;left:917.80px;top:23.90px;width:102.20px;height:372.90px;background:#525155;"></div>
<div style="position:absolute;left:917.80px;top:164.30px;width:102.20px;height:3.20px;background:#3f3e42;"></div>
<div style="position:absolute;left:917.80px;top:265.90px;width:102.20px;height:4.60px;background:#3f3e42;"></div>
<div style="position:absolute;left:917.80px;top:349.20px;width:102.20px;height:3.30px;background:#3f3e42;"></div>
<svg style="position:absolute;left:920.70px;top:28.45px" width="3.2" height="2.6" viewBox="0 0 3.2 2.6"><path d="M0 0 L3.2 0 L1.6 2.5Z" fill="#b9b9bc"/></svg><div style="position:absolute;top:26px;height:10px;line-height:10px;font-size:7.1px;color:#f4f4f4;white-space:nowrap;font-weight:bold;letter-spacing:0.289px;left:928.80px;">Material ID</div>
<div style="position:absolute;left:920.40px;top:38.00px;width:101.60px;height:11.60px;background:#6a636a;border-radius:1px;"></div>
<div style="position:absolute;top:40px;height:10px;line-height:10px;font-size:6.9px;color:#e6e6e6;white-space:nowrap;letter-spacing:-0.296px;left:922.60px;">Random</div>
<div style="position:absolute;left:920.30px;top:53.20px;width:25.50px;height:11.90px;background:#625e64;border-radius:2px;"></div>
<div style="position:absolute;top:54px;height:10px;line-height:10px;font-size:9.8px;color:#f0f0f0;white-space:nowrap;left:833.05px;width:200px;text-align:center;">X</div>
<div style="position:absolute;left:949.10px;top:53.20px;width:26.70px;height:11.90px;background:#625e64;border-radius:2px;"></div>
<div style="position:absolute;top:54px;height:10px;line-height:10px;font-size:9.8px;color:#f0f0f0;white-space:nowrap;left:862.45px;width:200px;text-align:center;">Y</div>
<div style="position:absolute;left:978.50px;top:53.20px;width:26.10px;height:11.90px;background:#625e64;border-radius:2px;"></div>
<div style="position:absolute;top:54px;height:10px;line-height:10px;font-size:9.8px;color:#f0f0f0;white-space:nowrap;left:891.55px;width:200px;text-align:center;">Z</div>
<div style="position:absolute;left:1007.90px;top:53.20px;width:15.10px;height:11.90px;background:#5b8ad0;border-radius:2px;"></div>
<div style="position:absolute;top:55px;height:10px;line-height:10px;font-size:7px;color:#f4f4f4;white-space:nowrap;left:1017.80px;">ID</div>
<div style="position:absolute;left:920.60px;top:71.40px;width:7.10px;height:7.00px;background:#656268;border-radius:1px;"></div>
<div style="position:absolute;top:71px;height:10px;line-height:10px;font-size:6.9px;color:#e6e6e6;white-space:nowrap;letter-spacing:-0.056px;left:930.80px;">Ignore Existing IDs</div>
<div style="position:absolute;top:86px;height:10px;line-height:10px;font-size:6.9px;color:#e6e6e6;white-space:nowrap;letter-spacing:-0.35px;right:63.45px;">From</div>
<div style="position:absolute;left:959.90px;top:84.60px;width:62.10px;height:11.40px;background:#6a636a;border-radius:1px;"></div><div style="position:absolute;top:86px;height:10px;line-height:10px;font-size:6.9px;color:#e6e6e6;white-space:nowrap;left:964.10px;">1</div>
<div style="position:absolute;top:102px;height:10px;line-height:10px;font-size:6.9px;color:#e6e6e6;white-space:nowrap;letter-spacing:-0.35px;right:63.45px;">To</div>
<div style="position:absolute;left:959.90px;top:100.20px;width:62.10px;height:11.30px;background:#6a636a;border-radius:1px;"></div><div style="position:absolute;top:102px;height:10px;line-height:10px;font-size:6.9px;color:#e6e6e6;white-space:nowrap;left:964.10px;">1</div>
<div style="position:absolute;top:117px;height:10px;line-height:10px;font-size:6.9px;color:#e6e6e6;white-space:nowrap;letter-spacing:-0.3px;right:63.40px;">N Times</div>
<div style="position:absolute;left:959.90px;top:115.60px;width:62.10px;height:11.40px;background:#6a636a;border-radius:1px;"></div><div style="position:absolute;top:117px;height:10px;line-height:10px;font-size:6.9px;color:#e6e6e6;white-space:nowrap;left:964.10px;">1</div>
<div style="position:absolute;top:133px;height:10px;line-height:10px;font-size:6.9px;color:#e6e6e6;white-space:nowrap;letter-spacing:-0.35px;right:63.45px;">Phase</div>
<div style="position:absolute;left:959.90px;top:131.20px;width:62.10px;height:11.50px;background:#6a636a;border-radius:1px;"></div><div style="position:absolute;top:133px;height:10px;line-height:10px;font-size:6.9px;color:#e6e6e6;white-space:nowrap;letter-spacing:0.424px;left:962.90px;">0.0%</div>
<div style="position:absolute;top:148px;height:10px;line-height:10px;font-size:6.9px;color:#e6e6e6;white-space:nowrap;letter-spacing:-0.35px;right:63.45px;">Seed</div>
<div style="position:absolute;left:960.80px;top:146.60px;width:57.20px;height:11.80px;background:#6a636a;border-radius:1px;"></div><div style="position:absolute;top:148px;height:10px;line-height:10px;font-size:6.9px;color:#e6e6e6;white-space:nowrap;letter-spacing:-0.272px;left:964.70px;">12345</div><svg style="position:absolute;left:1013.80px;top:149.60px" width="3.2" height="5.8" viewBox="0 0 3.2 5.8"><path d="M0 2.1 L1.6 0.3 L3.2 2.1Z M0 3.7 L1.6 5.5 L3.2 3.7Z" fill="#dcdcde"/></svg>
<svg style="position:absolute;left:920.70px;top:172.30px" width="3.2" height="2.6" viewBox="0 0 3.2 2.6"><path d="M0 0 L3.2 0 L1.6 2.5Z" fill="#b9b9bc"/></svg><div style="position:absolute;top:170px;height:10px;line-height:10px;font-size:7.1px;color:#f4f4f4;white-space:nowrap;font-weight:bold;letter-spacing:-0.35px;left:928.80px;">UV</div>
<div style="position:absolute;left:924.20px;top:186.30px;width:97.80px;height:11.70px;background:#6a636a;border-radius:1px;"></div>
<div style="position:absolute;top:188px;height:10px;line-height:10px;font-size:6.9px;color:#e6e6e6;white-space:nowrap;letter-spacing:-0.123px;left:926.80px;">Existing</div>
<div style="position:absolute;top:204px;height:10px;line-height:10px;font-size:6.9px;color:#7b7a7f;white-space:nowrap;letter-spacing:-0.251px;right:64.25px;">Channel</div>
<div style="position:absolute;left:960.80px;top:202.20px;width:61.20px;height:11.50px;background:#5b5a5f;border-radius:1px;"></div><div style="position:absolute;top:204px;height:10px;line-height:10px;font-size:6.9px;color:#7b7a7f;white-space:nowrap;left:965.20px;">1</div>
<div style="position:absolute;left:961.60px;top:219.80px;width:6.80px;height:6.60px;background:#57565a;border-radius:1px;"></div><svg style="position:absolute;left:961.60px;top:219.60px" width="7" height="7" viewBox="0 0 7 7"><path d="M1.2 3.3 L2.8 5.2 L5.9 1.2" fill="none" stroke="#929196" stroke-width="1.3"/></svg>
<div style="position:absolute;top:219px;height:10px;line-height:10px;font-size:6.9px;color:#7b7a7f;white-space:nowrap;letter-spacing:-0.35px;left:972.00px;">Normalize</div>
<div style="position:absolute;left:961.60px;top:235.40px;width:6.80px;height:6.60px;background:#57565a;border-radius:1px;"></div><svg style="position:absolute;left:961.60px;top:235.20px" width="7" height="7" viewBox="0 0 7 7"><path d="M1.2 3.3 L2.8 5.2 L5.9 1.2" fill="none" stroke="#929196" stroke-width="1.3"/></svg>
<div style="position:absolute;top:235px;height:10px;line-height:10px;font-size:6.9px;color:#7b7a7f;white-space:nowrap;letter-spacing:-0.15px;left:972.00px;">Additive</div>
<div style="position:absolute;top:250px;height:10px;line-height:10px;font-size:6.9px;color:#7b7a7f;white-space:nowrap;letter-spacing:-0.233px;right:64.33px;">Source</div>
<div style="position:absolute;left:960.80px;top:248.30px;width:61.20px;height:11.30px;background:#5b5a5f;border-radius:1px;"></div><div style="position:absolute;top:250px;height:10px;line-height:10px;font-size:6.9px;color:#7b7a7f;white-space:nowrap;left:965.20px;">1</div>
<svg style="position:absolute;left:920.70px;top:274.80px" width="3.2" height="2.6" viewBox="0 0 3.2 2.6"><path d="M0 0 L3.2 0 L1.6 2.5Z" fill="#b9b9bc"/></svg><div style="position:absolute;top:272px;height:10px;line-height:10px;font-size:7.1px;color:#f4f4f4;white-space:nowrap;font-weight:bold;letter-spacing:0.255px;left:928.80px;">Remove</div>
<div style="position:absolute;top:286px;height:10px;line-height:10px;font-size:6.9px;color:#e6e6e6;white-space:nowrap;letter-spacing:-0.299px;right:62.40px;">Remove</div>
<div style="position:absolute;left:961.10px;top:284.20px;width:60.90px;height:11.50px;background:#6a636a;border-radius:1px;"></div><div style="position:absolute;top:286px;height:10px;line-height:10px;font-size:6.9px;color:#e6e6e6;white-space:nowrap;letter-spacing:0.424px;left:964.10px;">0.0%</div>
<div style="position:absolute;top:302px;height:10px;line-height:10px;font-size:6.9px;color:#e6e6e6;white-space:nowrap;letter-spacing:-0.35px;right:64.35px;">Seed</div>
<div style="position:absolute;left:961.10px;top:299.60px;width:56.90px;height:11.80px;background:#6a636a;border-radius:1px;"></div><div style="position:absolute;top:302px;height:10px;line-height:10px;font-size:6.9px;color:#e6e6e6;white-space:nowrap;letter-spacing:-0.272px;left:965.00px;">12345</div><svg style="position:absolute;left:1013.80px;top:302.60px" width="3.2" height="5.8" viewBox="0 0 3.2 5.8"><path d="M0 2.1 L1.6 0.3 L3.2 2.1Z M0 3.7 L1.6 5.5 L3.2 3.7Z" fill="#dcdcde"/></svg>
<div style="position:absolute;left:920.30px;top:319.20px;width:102.70px;height:11.70px;background:#625e64;border-radius:2px;"></div>
<div style="position:absolute;top:321px;height:10px;line-height:10px;font-size:6.9px;color:#e6e6e6;white-space:nowrap;letter-spacing:-0.165px;left:876.42px;width:200px;text-align:center;">Ch36</div>
<div style="position:absolute;left:922.80px;top:337.20px;width:7.10px;height:7.00px;background:#656268;border-radius:1px;"></div>
<div style="position:absolute;top:337px;height:10px;line-height:10px;font-size:6.9px;color:#e6e6e6;white-space:nowrap;letter-spacing:0.309px;left:932.70px;">Invert</div>
<svg style="position:absolute;left:920.70px;top:356.70px" width="3.2" height="2.6" viewBox="0 0 3.2 2.6"><path d="M0 0 L3.2 0 L1.6 2.5Z" fill="#b9b9bc"/></svg><div style="position:absolute;top:354px;height:10px;line-height:10px;font-size:7.1px;color:#f4f4f4;white-space:nowrap;font-weight:bold;letter-spacing:0.28px;left:928.80px;">Create</div>
<div style="position:absolute;left:920.30px;top:366.90px;width:102.70px;height:11.10px;background:#625e64;border-radius:2px;"></div>
<div style="position:absolute;top:368px;height:10px;line-height:10px;font-size:6.9px;color:#e6e6e6;white-space:nowrap;letter-spacing:-0.063px;left:876.37px;width:200px;text-align:center;">Create Objects</div>
<div style="position:absolute;left:920.60px;top:384.10px;width:7.10px;height:7.00px;background:#656268;border-radius:1px;"></div><svg style="position:absolute;left:920.70px;top:384.10px" width="7" height="7" viewBox="0 0 7 7"><path d="M1.2 3.3 L2.8 5.2 L5.9 1.2" fill="none" stroke="#f2f2f2" stroke-width="1.3"/></svg>
<div style="position:absolute;top:384px;height:10px;line-height:10px;font-size:6.9px;color:#e6e6e6;white-space:nowrap;letter-spacing:-0.11px;left:930.80px;">Use Instances</div>
<div style="position:absolute;left:0.00px;top:541.30px;width:1020.00px;height:15.70px;background:#464549;"></div>
<div id="timeline" style="position:absolute;left:0;top:557px;width:1020px;height:17px;background:#333236">
<div style="position:absolute;left:1013.80px;top:0.00px;width:7.00px;height:17.00px;background:#403f43;"></div>
<svg width="1020" height="17" viewBox="0 0 1020 17" style="position:absolute;left:0;top:0">
<path d="M-4.2 0.4V8M5.2 0.4V8M14.6 0.4V8M24.0 0.4V8M33.4 0.4V8M42.8 0.4V8M52.2 0.4V8M61.6 0.4V8M71.0 0.4V8M80.4 0.4V8M89.8 0.4V8M99.2 0.4V8M108.6 0.4V8M118.0 0.4V8M127.4 0.4V8M136.8 0.4V8M146.2 0.4V8M155.6 0.4V8M165.0 0.4V8M174.4 0.4V8M183.8 0.4V8M193.2 0.4V8M202.6 0.4V8M212.0 0.4V8M221.4 0.4V8M230.8 0.4V8M240.2 0.4V8M249.6 0.4V8M259.0 0.4V8M268.4 0.4V8M277.8 0.4V8M287.2 0.4V8M296.6 0.4V8M306.0 0.4V8M315.4 0.4V8M324.8 0.4V8M334.2 0.4V8M343.6 0.4V8M353.0 0.4V8M362.4 0.4V8M371.8 0.4V8M381.2 0.4V8M390.6 0.4V8M400.0 0.4V8M409.4 0.4V8M418.8 0.4V8M428.2 0.4V8M437.6 0.4V8M447.0 0.4V8M456.4 0.4V8M465.8 0.4V8M475.2 0.4V8M484.6 0.4V8M494.0 0.4V8M503.4 0.4V8M512.8 0.4V8M522.2 0.4V8M531.6 0.4V8M541.0 0.4V8M550.4 0.4V8M559.8 0.4V8M569.2 0.4V8M578.6 0.4V8M588.0 0.4V8M597.4 0.4V8M606.8 0.4V8M616.2 0.4V8M625.6 0.4V8M635.0 0.4V8M644.4 0.4V8M653.8 0.4V8M663.2 0.4V8M672.6 0.4V8M682.0 0.4V8M691.4 0.4V8M700.8 0.4V8M710.2 0.4V8M719.6 0.4V8M729.0 0.4V8M738.4 0.4V8M747.8 0.4V8M757.2 0.4V8M766.6 0.4V8M776.0 0.4V8M785.4 0.4V8M794.8 0.4V8M804.2 0.4V8M813.6 0.4V8M823.0 0.4V8M832.4 0.4V8M841.8 0.4V8M851.2 0.4V8M860.6 0.4V8M870.0 0.4V8M879.4 0.4V8M888.8 0.4V8M898.2 0.4V8M907.6 0.4V8M917.0 0.4V8M926.4 0.4V8M935.8 0.4V8M945.2 0.4V8M954.6 0.4V8M964.0 0.4V8M973.4 0.4V8M982.8 0.4V8M992.2 0.4V8M1001.6 0.4V8M1011.0 0.4V8" stroke="#77767b" stroke-width="0.9" fill="none"/>
<text x="23.5" y="15.4" font-size="7" letter-spacing="-0.3" fill="#cfcfd1" text-anchor="middle" font-family='"Liberation Sans", sans-serif'>15</text>
<text x="70.6" y="15.4" font-size="7" letter-spacing="-0.3" fill="#cfcfd1" text-anchor="middle" font-family='"Liberation Sans", sans-serif'>20</text>
<text x="117.6" y="15.4" font-size="7" letter-spacing="-0.3" fill="#cfcfd1" text-anchor="middle" font-family='"Liberation Sans", sans-serif'>25</text>
<text x="164.6" y="15.4" font-size="7" letter-spacing="-0.3" fill="#cfcfd1" text-anchor="middle" font-family='"Liberation Sans", sans-serif'>30</text>
<text x="211.6" y="15.4" font-size="7" letter-spacing="-0.3" fill="#cfcfd1" text-anchor="middle" font-family='"Liberation Sans", sans-serif'>35</text>
<text x="258.5" y="15.4" font-size="7" letter-spacing="-0.3" fill="#cfcfd1" text-anchor="middle" font-family='"Liberation Sans", sans-serif'>40</text>
<text x="305.5" y="15.4" font-size="7" letter-spacing="-0.3" fill="#cfcfd1" text-anchor="middle" font-family='"Liberation Sans", sans-serif'>45</text>
<text x="352.5" y="15.4" font-size="7" letter-spacing="-0.3" fill="#cfcfd1" text-anchor="middle" font-family='"Liberation Sans", sans-serif'>50</text>
<text x="399.5" y="15.4" font-size="7" letter-spacing="-0.3" fill="#cfcfd1" text-anchor="middle" font-family='"Liberation Sans", sans-serif'>55</text>
<text x="446.5" y="15.4" font-size="7" letter-spacing="-0.3" fill="#cfcfd1" text-anchor="middle" font-family='"Liberation Sans", sans-serif'>60</text>
<text x="493.5" y="15.4" font-size="7" letter-spacing="-0.3" fill="#cfcfd1" text-anchor="middle" font-family='"Liberation Sans", sans-serif'>65</text>
<text x="540.5" y="15.4" font-size="7" letter-spacing="-0.3" fill="#cfcfd1" text-anchor="middle" font-family='"Liberation Sans", sans-serif'>70</text>
<text x="587.5" y="15.4" font-size="7" letter-spacing="-0.3" fill="#cfcfd1" text-anchor="middle" font-family='"Liberation Sans", sans-serif'>75</text>
<text x="634.5" y="15.4" font-size="7" letter-spacing="-0.3" fill="#cfcfd1" text-anchor="middle" font-family='"Liberation Sans", sans-serif'>80</text>
<text x="681.5" y="15.4" font-size="7" letter-spacing="-0.3" fill="#cfcfd1" text-anchor="middle" font-family='"Liberation Sans", sans-serif'>85</text>
<text x="728.5" y="15.4" font-size="7" letter-spacing="-0.3" fill="#cfcfd1" text-anchor="middle" font-family='"Liberation Sans", sans-serif'>90</text>
<text x="775.5" y="15.4" font-size="7" letter-spacing="-0.3" fill="#cfcfd1" text-anchor="middle" font-family='"Liberation Sans", sans-serif'>95</text>
<text x="822.6" y="15.4" font-size="7" letter-spacing="-0.35" fill="#cfcfd1" text-anchor="middle" font-family='"Liberation Sans", sans-serif'>100</text>
<text x="869.6" y="15.4" font-size="7" letter-spacing="-0.35" fill="#cfcfd1" text-anchor="middle" font-family='"Liberation Sans", sans-serif'>105</text>
<text x="916.6" y="15.4" font-size="7" letter-spacing="-0.35" fill="#cfcfd1" text-anchor="middle" font-family='"Liberation Sans", sans-serif'>110</text>
<text x="963.6" y="15.4" font-size="7" letter-spacing="-0.35" fill="#cfcfd1" text-anchor="middle" font-family='"Liberation Sans", sans-serif'>115</text>
<text x="1010.6" y="15.4" font-size="7" letter-spacing="-0.35" fill="#cfcfd1" text-anchor="middle" font-family='"Liberation Sans", sans-serif'>120</text>
</svg></div>
</div></body></html>
